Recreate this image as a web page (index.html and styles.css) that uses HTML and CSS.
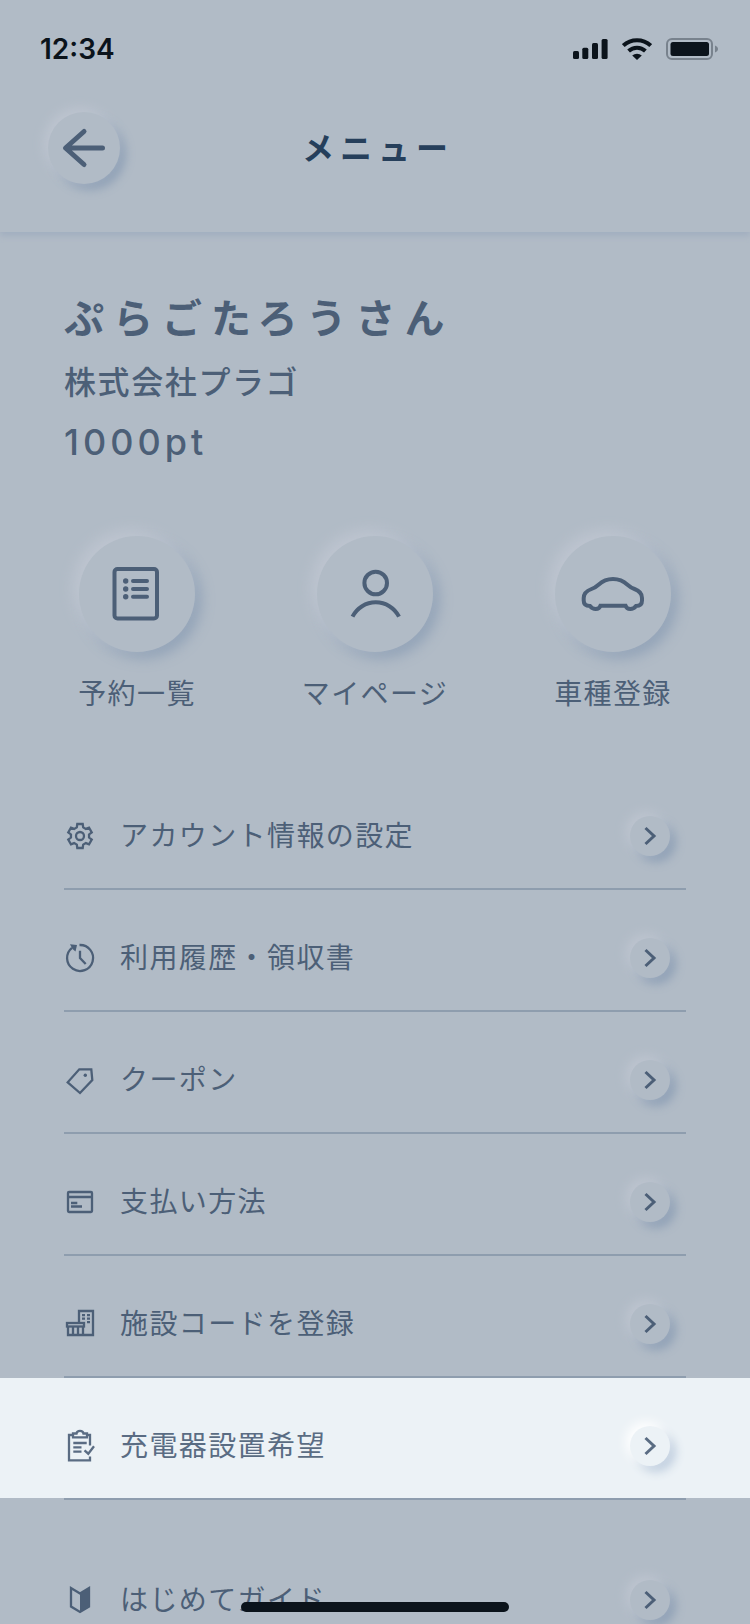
FILE: index.html
```html
<!DOCTYPE html>
<html lang="ja">
<head>
<meta charset="utf-8">
<meta name="viewport" content="width=device-width, initial-scale=1">
<title>メニュー</title>
<link rel="stylesheet" href="styles.css">
</head>
<body>
<div class="screen">
  <header class="header">
    <div class="status">
      <span class="time">12:34</span>
      <div class="status-icons">
        <svg class="signal" viewBox="0 0 35 22" aria-hidden="true">
          <rect x="0" y="13" width="6" height="8" rx="1.5"/><rect x="9.3" y="9.7" width="6" height="11.3" rx="1.5"/>
          <rect x="19" y="5" width="6" height="16" rx="1.5"/><rect x="28.6" y="1" width="6" height="20" rx="1.5"/>
        </svg>
        <svg class="wifi" viewBox="0 0 30 22" aria-hidden="true">
          <path class="wave" d="M1.3 7.6A20 20 0 0 1 28.7 7.6M6.6 13A12.4 12.4 0 0 1 23.4 13"/>
          <path d="M15 22L10.2 17.6A7.4 7.4 0 0 1 19.8 17.6Z"/>
        </svg>
        <svg class="battery" viewBox="0 0 52 22" aria-hidden="true">
          <rect class="shell" x="1" y="1" width="45" height="20" rx="5"/>
          <rect x="4.5" y="4" width="38.5" height="14" rx="2.5"/>
          <path class="nub" d="M49 7.5C53 9 53 13 49 14.5Z"/>
        </svg>
      </div>
    </div>
    <div class="nav">
      <button class="round back" type="button" aria-label="戻る">
        <svg viewBox="0 0 72 72"><path d="M54.500 36H18M36 19.500L17.500 36L36 52.500"/></svg>
      </button>
      <h1 class="title">メニュー</h1>
    </div>
  </header>

  <main class="content">
    <section class="profile">
      <h2 class="name">ぷらごたろうさん</h2>
      <p class="company">株式会社プラゴ</p>
      <p class="points">1000pt</p>
    </section>

    <nav class="shortcuts">
      <a class="shortcut" href="#reservations">
        <span class="round disc"><svg viewBox="0 0 116 116">
          <rect x="35.500" y="33" width="42.500" height="49.500" rx="3"/>
          <path class="cap" d="M54 45H68M54 53H68M54 60.700H68"/>
          <g class="solid"><circle cx="46.700" cy="45" r="2.700"/><circle cx="46.700" cy="53" r="2.700"/><circle cx="46.700" cy="60.700" r="2.700"/></g>
        </svg></span>
        <span class="label">予約一覧</span>
      </a>
      <a class="shortcut" href="#mypage">
        <span class="round disc"><svg viewBox="0 0 116 116">
          <circle cx="58.700" cy="47" r="11.300"/><path d="M35.500 80.700A26 26 0 0 1 82 80.700"/>
        </svg></span>
        <span class="label">マイページ</span>
      </a>
      <a class="shortcut" href="#car">
        <span class="round disc"><svg viewBox="0 0 116 116">
          <path d="M58 43C52 43 47.500 45 43.500 48.700C41.500 50.500 40 51.700 36.500 53C31 55 28.700 57.500 28.700 62V64.500C28.700 68 30.500 70 35 70C36.500 72 38 73 40.700 73C43.500 73 44.800 72 45.500 69.700H70.500C71.200 72 72.500 73 75.300 73C78 73 79.500 72 81 70C85.500 70 87 68 87 64.500V62C87 57.500 85 55 79.500 53C76 51.700 74.500 50.500 72.500 48.700C68.500 45 64 43 58 43Z"/>
        </svg></span>
        <span class="label">車種登録</span>
      </a>
    </nav>

    <ul class="menu">
      <li><a class="row" href="#account">
        <svg class="icon" viewBox="0 0 32 32"><circle cx="16" cy="16" r="4"/>
          <path d="M12.800 7.400L13.300 4H18.700L19.200 7.400L21.850 8.930L25.040 7.660L27.740 12.340L25.050 14.470V17.530L27.740 19.660L25.040 24.340L21.850 23.070L19.200 24.600L18.700 28H13.300L12.800 24.600L10.150 23.070L6.960 24.340L4.260 19.660L6.950 17.530V14.470L4.260 12.340L6.960 7.660L10.150 8.930Z"/></svg>
        <span class="text">アカウント情報の設定</span>
        <span class="round go"><svg viewBox="0 0 40 40"><path d="M15.500 12L24 20L15.500 28"/></svg></span></a></li>
      <li><a class="row" href="#history">
        <svg class="icon" viewBox="0 0 32 32"><path d="M15.500 3A13 13 0 1 1 8 5.800"/><path d="M16 8.700V16L21.700 22"/>
          <path class="solid" d="M6 2.200L13 3L11.500 9.500L8.500 7Z"/></svg>
        <span class="text">利用履歴・領収書</span>
        <span class="round go"><svg viewBox="0 0 40 40"><path d="M15.500 12L24 20L15.500 28"/></svg></span></a></li>
      <li><a class="row" href="#coupon">
        <svg class="icon" viewBox="0 0 32 32"><path d="M15.300 5.300H27.300L28.300 16L16 29L3.700 18.300Z"/><circle class="solid" cx="21.300" cy="11.300" r="1.700"/></svg>
        <span class="text">クーポン</span>
        <span class="round go"><svg viewBox="0 0 40 40"><path d="M15.500 12L24 20L15.500 28"/></svg></span></a></li>
      <li><a class="row" href="#payment">
        <svg class="icon" viewBox="0 0 32 32"><rect x="4" y="6" width="24" height="20" rx="1"/><path d="M4 11H28M7 17H13.300M7 20.500H18"/></svg>
        <span class="text">支払い方法</span>
        <span class="round go"><svg viewBox="0 0 40 40"><path d="M15.500 12L24 20L15.500 28"/></svg></span></a></li>
      <li><a class="row" href="#facility">
        <svg class="icon" viewBox="0 0 32 32"><path d="M15 14V3H29V27H4V18M19 18V27M9 18V27M14 18V27"/><rect x="3" y="15" width="17" height="3.500"/>
          <path d="M18 7.200H21M23 7.200H26M18 10.700H21M23 10.700H26M23 14.200H26"/></svg>
        <span class="text">施設コードを登録</span>
        <span class="round go"><svg viewBox="0 0 40 40"><path d="M15.500 12L24 20L15.500 28"/></svg></span></a></li>
      <li class="active"><a class="row" href="#charger">
        <svg class="icon" viewBox="0 0 32 32"><path d="M9 5H5V30.300H26V26.500M23.500 5H26V15.500M9.300 13H22.700M9.300 17.300H17.500M9.300 21.700H17.500M20.500 20.300L24.300 23.700L30 16.300"/>
          <path d="M9 7.300V3.500H12.500C13 0 19 0 19.500 3.500H23V7.300Z"/></svg>
        <span class="text">充電器設置希望</span>
        <span class="round go"><svg viewBox="0 0 40 40"><path d="M15.500 12L24 20L15.500 28"/></svg></span></a></li>
    </ul>
    <ul class="menu">
      <li><a class="row" href="#guide">
        <svg class="icon" viewBox="0 0 32 32"><path d="M16 9.500L7 4V22.500L16 28L25 22.500V4Z"/><path class="solid" d="M16 9.500L25.500 3.500V22.700L16 28.500Z"/></svg>
        <span class="text">はじめてガイド</span>
        <span class="round go"><svg viewBox="0 0 40 40"><path d="M15.500 12L24 20L15.500 28"/></svg></span></a></li>
    </ul>
  </main>
  <div class="home-indicator"></div>
</div>
</body>
</html>
```

FILE: styles.css
```css
:root {
  --bg: #b1bbc6;
  --ink: #4c5f77;
  --line: #8e9dae;
  --light: #bec5d0;
  --shade: #91a2b7;
}
* { box-sizing: border-box; }
body {
  margin: 0;
  background: var(--bg);
  color: var(--ink);
  font-family: "Noto Sans CJK JP", sans-serif;
}
h1, h2, p, ul { margin: 0; padding: 0; }
ul { list-style: none; }
a { color: inherit; text-decoration: none; }
svg { display: block; }

.screen {
  position: relative;
  display: flex;
  flex-direction: column;
  height: 100vh;
  overflow: hidden;
}

.header {
  flex: none;
  background: var(--bg);
  box-shadow: 0 4px 6px #a2afc0;
}
.status {
  display: flex;
  align-items: center;
  justify-content: space-between;
  height: 96px;
  padding: 2px 32px 0 40px;
  color: #0b131b;
}
.time {
  font: 600 28px/36px Inter, sans-serif;
}
.status-icons { display: flex; align-items: center; gap: 14px; fill: currentColor; }
.signal { width: 35px; height: 22px; }
.wifi { width: 30px; height: 22px; }
.battery { width: 52px; height: 22px; }
.wave { fill: none; stroke: currentColor; stroke-width: 4; }
.shell { fill: none; stroke: #78828d; stroke-width: 2; }
.nub { fill: #78828d; }

.nav {
  display: grid;
  grid-template-columns: 72px 1fr 72px;
  align-items: center;
  padding: 16px 48px 48px;
}
.title {
  padding: 0 0 4px 6px;
  color: #263f5b;
  font-size: 32px;
  font-weight: 700;
  line-height: 48px;
  letter-spacing: 6px;
  text-align: center;
}

.round {
  display: block;
  flex: none;
  border: 0;
  padding: 0;
  border-radius: 50%;
  background: var(--bg);
  box-shadow: -4px -4px 12px var(--light), 6px 6px 10px var(--shade);
}
.round svg {
  width: 100%;
  height: 100%;
  fill: none;
  stroke: var(--ink);
  stroke-width: 4;
}
.round .cap { stroke-linecap: round; }
.round .solid { fill: var(--ink); stroke: none; }
.back { width: 72px; height: 72px; }
.back svg { stroke-width: 5; stroke-linecap: round; stroke-linejoin: round; }
.disc { width: 116px; height: 116px; box-shadow: -6px -6px 14px var(--light), 6px 6px 14px var(--shade); }
.go { width: 40px; height: 40px; }
.go svg { stroke-width: 3; }

.content {
  flex: 1;
  min-height: 0;
  overflow-y: auto;
  scrollbar-width: none;
}
.profile {
  display: flex;
  flex-direction: column;
  gap: 14px;
  padding: 62px 64px 0;
  line-height: 48px;
}
.name { padding-bottom: 4px; font-size: 40px; font-weight: 700; line-height: 44px; letter-spacing: 9px; }
.company { font-size: 32px; font-weight: 500; letter-spacing: 0.05em; }
.points { font-family: Inter, sans-serif; font-size: 36px; font-weight: 500; letter-spacing: 4px; }

.shortcuts {
  display: flex;
  justify-content: space-between;
  padding: 70px 64px 0;
}
.shortcut {
  display: flex;
  flex-direction: column;
  align-items: center;
  gap: 20px;
  min-width: 146px;
}
.label, .text {
  font-size: 28px;
  line-height: 40px;
  letter-spacing: 0.05em;
}

.menu { padding-top: 32px; }
.shortcuts + .menu { padding-top: 56px; }
.row {
  display: flex;
  align-items: center;
  gap: 24px;
  height: 122px;
  margin: 0 64px;
  padding: 16px 16px 0 0;
  border-bottom: 2px solid var(--line);
}
.text { flex: 1; padding-bottom: 4px; }
.icon {
  flex: none;
  width: 32px;
  height: 32px;
  overflow: visible;
  fill: none;
  stroke: var(--ink);
  stroke-width: 2.3;
}
.icon .solid { fill: var(--ink); stroke: none; }
.active {
  --bg: #ecf2f6;
  --ink: #5a6c83;
  --light: #ffffff;
  --shade: #c2d0e0;
  color: var(--ink);
  background: linear-gradient(to top, transparent 2px, var(--bg) 2px);
}

.home-indicator {
  position: absolute;
  bottom: 12px;
  left: 50%;
  width: 268px;
  height: 10px;
  border-radius: 5px;
  background: #0b131b;
  transform: translateX(-50%);
}
```
